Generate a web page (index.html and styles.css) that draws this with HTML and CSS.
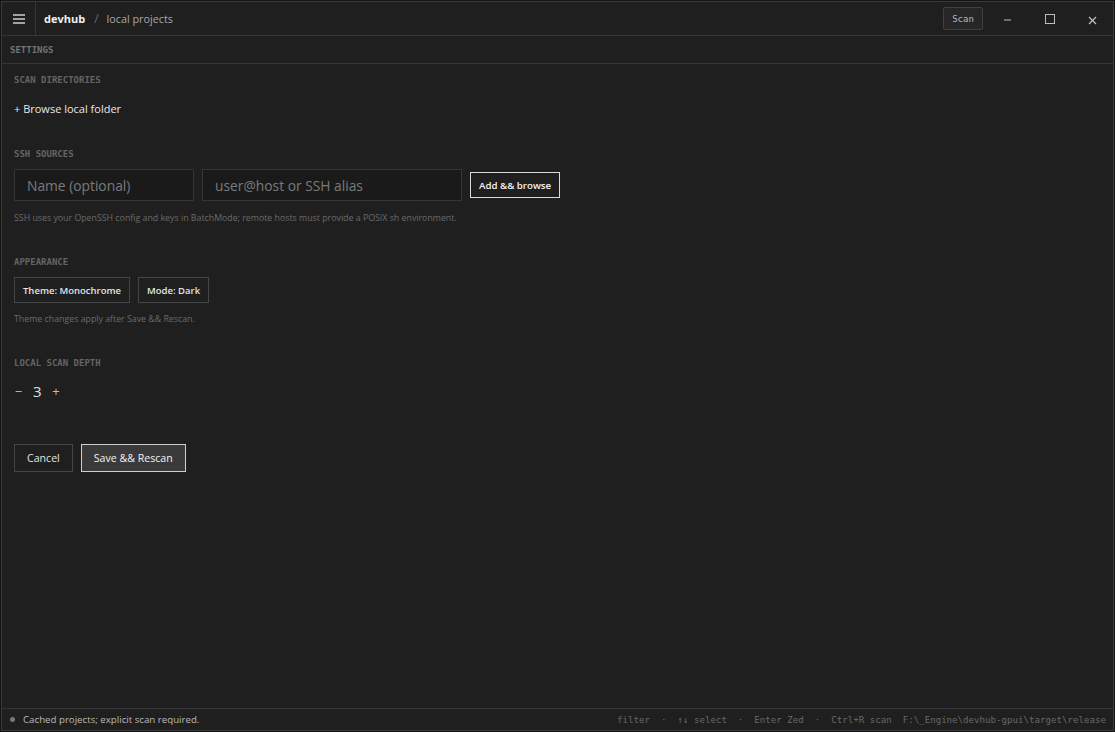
FILE: index.html
```html
<!DOCTYPE html>
<html lang="en">
<head>
    <meta charset="UTF-8">
    <meta name="viewport" content="width=device-width, initial-scale=1.0">
    <title>devhub</title>
    <link rel="stylesheet" href="styles.css">
</head>
<body>
    <div class="window">
        <header class="titlebar">
            <div class="menu-cell">
                <svg width="12" height="10" viewBox="0 0 12 10">
                    <path d="M0 1h12M0 5h12M0 9h12" stroke="#cfcfcf" stroke-width="1.4"/>
                </svg>
            </div>
            <div class="crumbs">
                <span class="app-name">devhub</span>
                <span class="crumb-sep">/</span>
                <span class="crumb">local projects</span>
            </div>
            <button class="scan-btn">Scan</button>
            <div class="controls">
                <div class="ctl">
                    <svg width="8" height="2" viewBox="0 0 8 2"><path d="M0 1h7" stroke="#bdbdbd" stroke-width="1"/></svg>
                </div>
                <div class="ctl">
                    <svg width="10" height="10" viewBox="0 0 10 10"><rect x="0.5" y="0.5" width="9" height="9" fill="none" stroke="#bdbdbd" stroke-width="1"/></svg>
                </div>
                <div class="ctl">
                    <svg width="9" height="9" viewBox="0 0 9 9"><path d="M1 1l7 7M8 1l-7 7" stroke="#bdbdbd" stroke-width="1.3"/></svg>
                </div>
            </div>
        </header>

        <div class="pane-header">SETTINGS</div>

        <main class="settings">
            <section class="section">
                <div class="label">SCAN DIRECTORIES</div>
                <div class="browse">+ Browse local folder</div>
            </section>

            <section class="section">
                <div class="label">SSH SOURCES</div>
                <div class="ssh-row">
                    <input class="field name-field" placeholder="Name (optional)">
                    <input class="field host-field" placeholder="user@host or SSH alias">
                    <button class="btn btn-strong">Add &amp;&amp; browse</button>
                </div>
                <div class="hint">SSH uses your OpenSSH config and keys in BatchMode; remote hosts must provide a POSIX sh environment.</div>
            </section>

            <section class="section">
                <div class="label">APPEARANCE</div>
                <div class="btn-row">
                    <button class="btn">Theme: Monochrome</button>
                    <button class="btn">Mode: Dark</button>
                </div>
                <div class="hint">Theme changes apply after Save &amp;&amp; Rescan.</div>
            </section>

            <section class="section">
                <div class="label">LOCAL SCAN DEPTH</div>
                <div class="stepper">
                    <span class="step">&minus;</span>
                    <span class="depth">3</span>
                    <span class="step">+</span>
                </div>
            </section>

            <div class="actions">
                <button class="btn btn-lg">Cancel</button>
                <button class="btn btn-lg btn-primary">Save &amp;&amp; Rescan</button>
            </div>
        </main>

        <footer class="statusbar">
            <span class="dot"></span>
            <span class="status-text">Cached projects; explicit scan required.</span>
            <div class="keys">filter  ·  ↑↓ select  ·  Enter Zed  ·  Ctrl+R scan  F:\_Engine\devhub-gpui\target\release</div>
        </footer>
    </div>
</body>
</html>
```

FILE: styles.css
```css
:root {
    --bg: #1f1f1f;
    --border: #353535;
    --text: #e6e6e6;
    --sans: 'Open Sans', 'Noto Sans', sans-serif;
    --mono: 'DejaVu Sans Mono', 'Liberation Mono', monospace;
}

* {
    margin: 0;
    padding: 0;
    box-sizing: border-box;
}

html, body {
    height: 100%;
}

body {
    background: #141414;
    padding: 1px;
    font-family: var(--sans);
    color: var(--text);
}

.window {
    height: 100%;
    display: flex;
    flex-direction: column;
    background: var(--bg);
    border: 1px solid #3a3a3a;
    overflow: hidden;
}

/* title bar */
.titlebar {
    height: 34px;
    display: flex;
    align-items: center;
    border-bottom: 1px solid var(--border);
    flex-shrink: 0;
}

.menu-cell {
    width: 34px;
    height: 100%;
    display: flex;
    align-items: center;
    justify-content: center;
    border-right: 1px solid var(--border);
}

.crumbs {
    flex: 1;
    display: flex;
    align-items: baseline;
    padding-left: 8px;
    font-size: 11px;
}

.app-name {
    font-weight: 700;
    color: #f0f0f0;
}

.crumb-sep {
    color: #666;
    margin: 0 8px 0 9px;
    font-size: 12px;
}

.crumb {
    color: #a8a8a8;
    font-size: 10.8px;
}

.scan-btn {
    width: 40px;
    height: 23px;
    background: #262626;
    border: 1px solid #404040;
    border-radius: 2px;
    color: #b8b8b8;
    font-family: var(--mono);
    font-size: 9px;
    margin-right: 4px;
}

.controls {
    display: flex;
    height: 100%;
}

.ctl {
    width: 42px;
    display: flex;
    align-items: center;
    justify-content: center;
}

.ctl:first-child svg {
    margin-top: 2px;
}

.ctl:last-child svg {
    margin-top: 4px;
}

/* pane header */
.pane-header {
    height: 28px;
    border-bottom: 1px solid var(--border);
    padding-left: 8px;
    display: flex;
    align-items: center;
    font-family: var(--mono);
    font-size: 9px;
    font-weight: 700;
    color: #747474;
    flex-shrink: 0;
}

/* settings body */
.settings {
    flex: 1;
    padding: 10px 12px 0;
}

.section {
    margin-bottom: 32px;
}

.label {
    font-family: var(--mono);
    font-size: 9px;
    font-weight: 700;
    line-height: 12px;
    color: #646464;
    margin-bottom: 9px;
}

.browse {
    font-size: 11px;
    line-height: 14px;
    color: #e8e8e8;
    padding-top: 7px;
    margin-bottom: 1px;
}

.ssh-row {
    display: flex;
    align-items: center;
    gap: 8px;
}

.field {
    height: 32px;
    background: #1a1a1a;
    border: 1px solid #363636;
    color: var(--text);
    font-family: var(--sans);
    font-size: 13.8px;
    padding: 0 12px;
    outline: none;
}

.field::placeholder {
    color: #7a7a7a;
}

.name-field {
    width: 180px;
}

.host-field {
    width: 260px;
}

.hint {
    font-size: 8.8px;
    line-height: 12px;
    color: #6a6a6a;
    margin-top: 11px;
}

.btn-row {
    display: flex;
    gap: 8px;
}

.btn-row + .hint {
    margin-top: 10px;
}

.btn {
    height: 26px;
    padding: 0 8px;
    background: var(--bg);
    border: 1px solid #454545;
    color: #e4e4e4;
    font-family: var(--sans);
    font-size: 9.5px;
    font-weight: 600;
}

.btn-strong {
    height: 26px;
    border-color: #dadada;
    color: #f4f4f4;
    font-size: 9.7px;
}

.stepper {
    display: flex;
    align-items: center;
    gap: 10px;
    height: 26px;
    color: #cfcfcf;
}

.step {
    font-size: 13px;
    width: 9px;
    text-align: center;
    color: #bdbdbd;
}

.depth {
    font-size: 15px;
    color: #e0e0e0;
}

.actions {
    display: flex;
    gap: 8px;
    margin-top: 40px;
}

.btn-lg {
    height: 28px;
    padding: 0 12px;
    font-size: 10.6px;
    font-weight: 400;
}

.btn-primary {
    background: #3a3a3a;
    border-color: #cfcfcf;
    color: #f2f2f2;
}

/* status bar */
.statusbar {
    height: 22px;
    border-top: 1px solid var(--border);
    display: flex;
    align-items: center;
    padding-left: 8px;
    flex-shrink: 0;
    white-space: nowrap;
}

.dot {
    width: 5px;
    height: 5px;
    border-radius: 50%;
    background: #777;
    margin-right: 8px;
}

.status-text {
    font-size: 9.7px;
    color: #b9b9b9;
}

.keys {
    margin-left: auto;
    margin-right: 6px;
    width: 490px;
    overflow: hidden;
    white-space: pre;
    font-family: var(--mono);
    font-size: 9.15px;
    color: #686868;
}
```
